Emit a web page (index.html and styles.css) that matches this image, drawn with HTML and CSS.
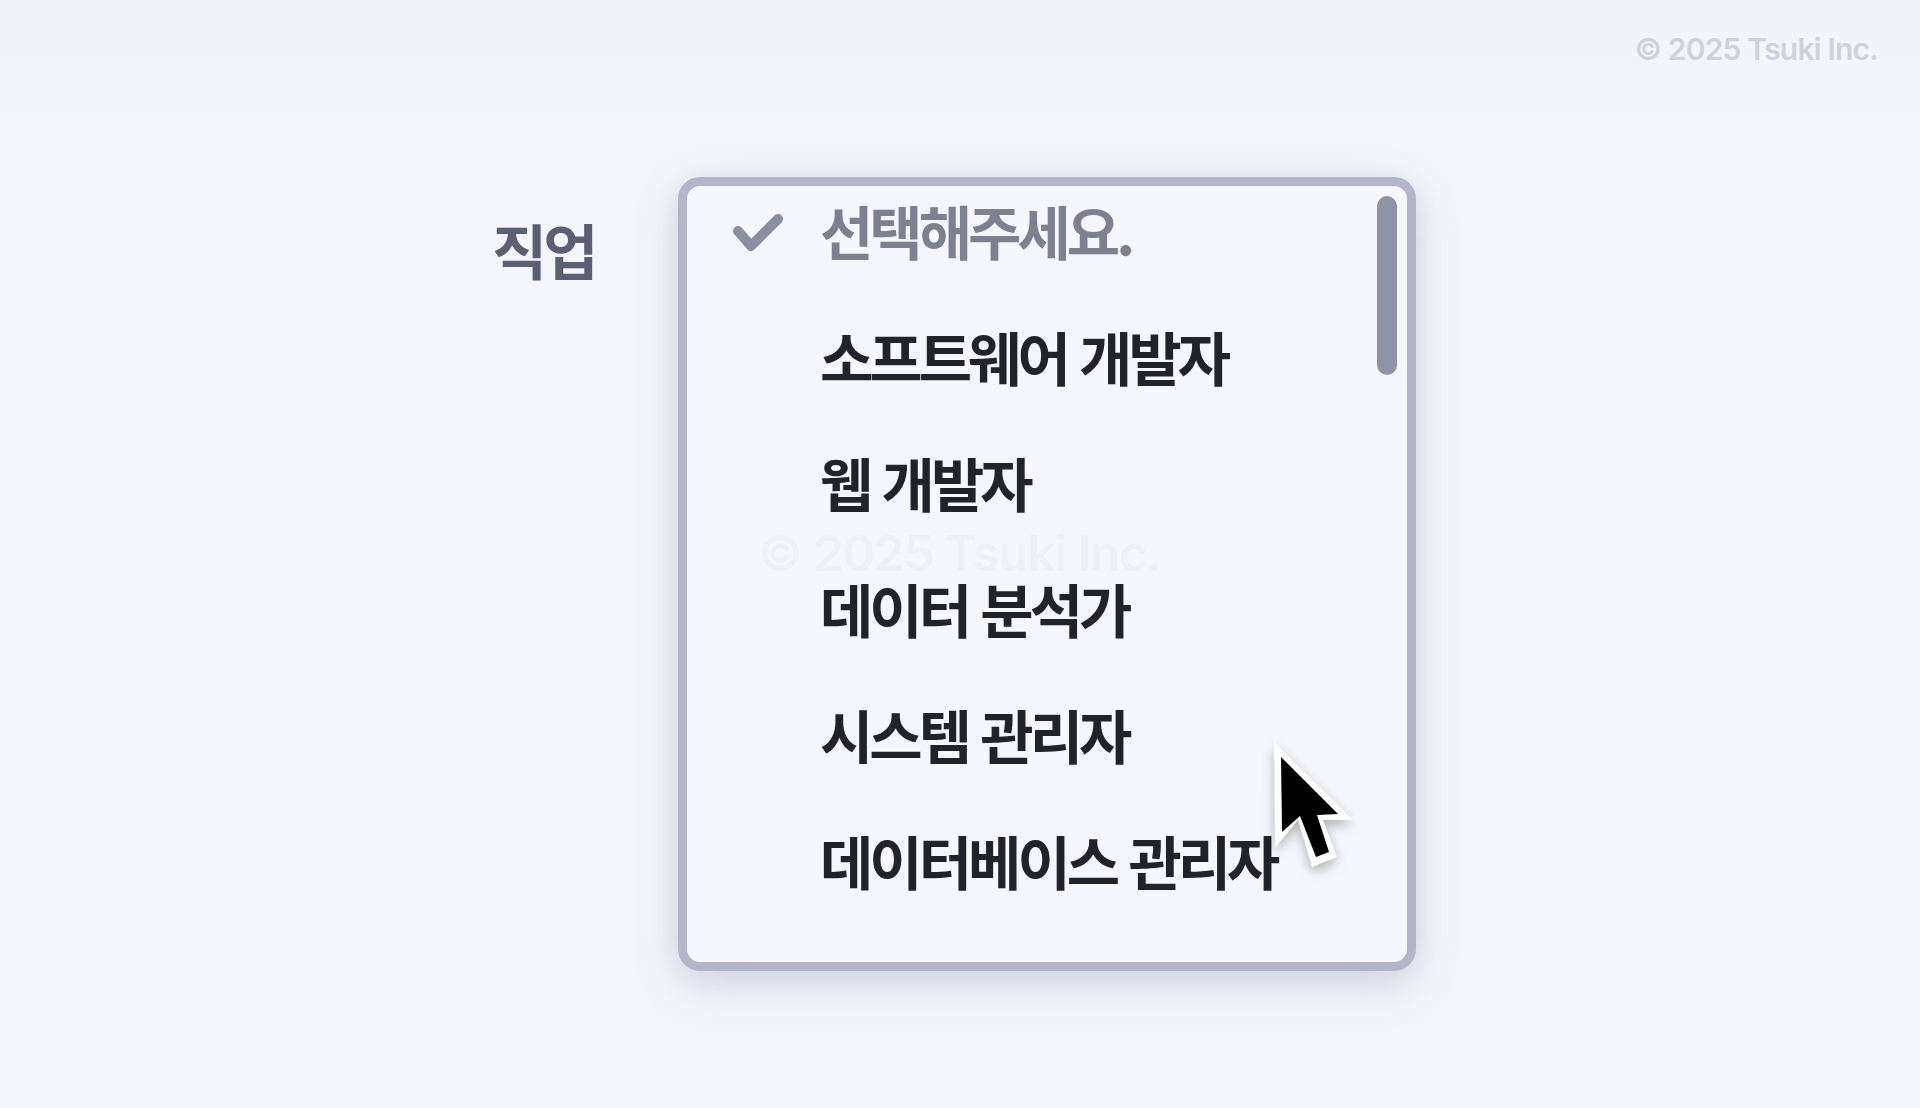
FILE: index.html
```
<!DOCTYPE html>
<html lang="ko">
<head>
  <meta charset="UTF-8">
  <title>직업 선택</title>
  <link rel="stylesheet" href="styles.css">
</head>
<body>

  <header class="top-bar">
    <span class="copyright">© 2025 Tsuki Inc.</span>
  </header>

  <main class="form-row">
    <label class="field-label" for="job">직업</label>

    <div class="select-menu" id="job">
      <ul class="option-list">
        <li class="option option-placeholder">
          <span class="check">
            <svg width="50" height="38" viewBox="0 0 50 38">
              <polyline points="5,17 18,32 45,5" fill="none" stroke="#8a8fa2" stroke-width="10" stroke-linecap="round" stroke-linejoin="round"/>
            </svg>
          </span>
          <span class="option-text">선택해주세요.</span>
        </li>
        <li class="option"><span class="check"></span><span class="option-text">소프트웨어 개발자</span></li>
        <li class="option"><span class="check"></span><span class="option-text">웹 개발자</span></li>
        <li class="option"><span class="check"></span><span class="option-text">데이터 분석가</span></li>
        <li class="option"><span class="check"></span><span class="option-text">시스템 관리자</span></li>
        <li class="option"><span class="check"></span><span class="option-text">데이터베이스 관리자</span></li>
        <li class="option option-partial"><span class="check"></span><span class="option-text">UI/UX 디자이너</span></li>
      </ul>
      <div class="scroll-thumb"></div>
    </div>
  </main>

  <div class="watermark">© 2025 Tsuki Inc.</div>

  <svg class="cursor" width="90" height="140" viewBox="-6 -6 90 140">
    <polygon points="0,0 1,106 24,78 38,125 63,115 49,78 79,78" fill="#fff"/>
    <polygon points="7,15 8,90 26,74 42,115 55,110 43,73 64,72" fill="#000"/>
  </svg>

</body>
</html>
```

FILE: styles.css
```
html, body {
  margin: 0;
  height: 100%;
}
body {
  position: relative;
  width: 1920px;
  height: 1108px;
  overflow: hidden;
  background: linear-gradient(#f3f4fa, #f5f6fc 12%);
  font-family: "Noto Sans CJK KR", "Noto Sans", sans-serif;
}
.top-bar {
  display: flex;
  justify-content: flex-end;
  padding: 31px 42px 0 0;
  height: 53px;
}
.copyright {
  font-family: Inter, "Noto Sans", sans-serif;
  font-weight: 600;
  font-size: 30px;
  letter-spacing: -0.8px;
  line-height: 36px;
  color: #cfd2dd;
}
.form-row {
  display: flex;
  align-items: flex-start;
  padding: 93px 0 0 492px;
}
.field-label {
  width: 186px;
  margin-top: 37px;
  font-size: 60px;
  font-weight: 700;
  line-height: 70px;
  letter-spacing: -4px;
  color: #5a5f74;
}
.select-menu {
  position: relative;
  width: 720px;
  height: 776px;
  border: 9px solid #b3b6ca;
  border-radius: 22px;
  background: #f6f7fe;
  overflow: hidden;
  box-shadow: 0 14px 44px rgba(90, 96, 135, 0.22), 0 0 24px rgba(90, 96, 135, 0.08);
}
.option-list {
  list-style: none;
  margin: 0;
  padding: 0;
}
.option {
  display: flex;
  align-items: flex-start;
  box-sizing: border-box;
  height: 126px;
  padding: 9px 0 0 46px;
}
.option-partial {
  padding-top: 11px;
}
.option .check {
  display: flex;
  width: 50px;
  height: 70px;
  align-items: center;
  margin-right: 37px;
  padding-top: 6px;
  box-sizing: border-box;
}
.option-text {
  font-size: 58px;
  font-weight: 700;
  line-height: 70px;
  letter-spacing: -4px;
  color: #212329;
  white-space: nowrap;
}
.option-placeholder .option-text {
  color: #7c8091;
}
.scroll-thumb {
  position: absolute;
  top: 10px;
  right: 10px;
  width: 20px;
  height: 179px;
  border-radius: 10px;
  background: #8e93a7;
}
.watermark {
  position: absolute;
  left: 758px;
  top: 524px;
  font-family: Inter, "Noto Sans", sans-serif;
  font-weight: 600;
  font-size: 49px;
  letter-spacing: -1px;
  line-height: 60px;
  color: rgba(205, 210, 228, 0.2);
  pointer-events: none;
}
.cursor {
  position: absolute;
  left: 1268px;
  top: 736px;
  filter: drop-shadow(0 5px 6px rgba(0, 0, 0, 0.28));
}
```
